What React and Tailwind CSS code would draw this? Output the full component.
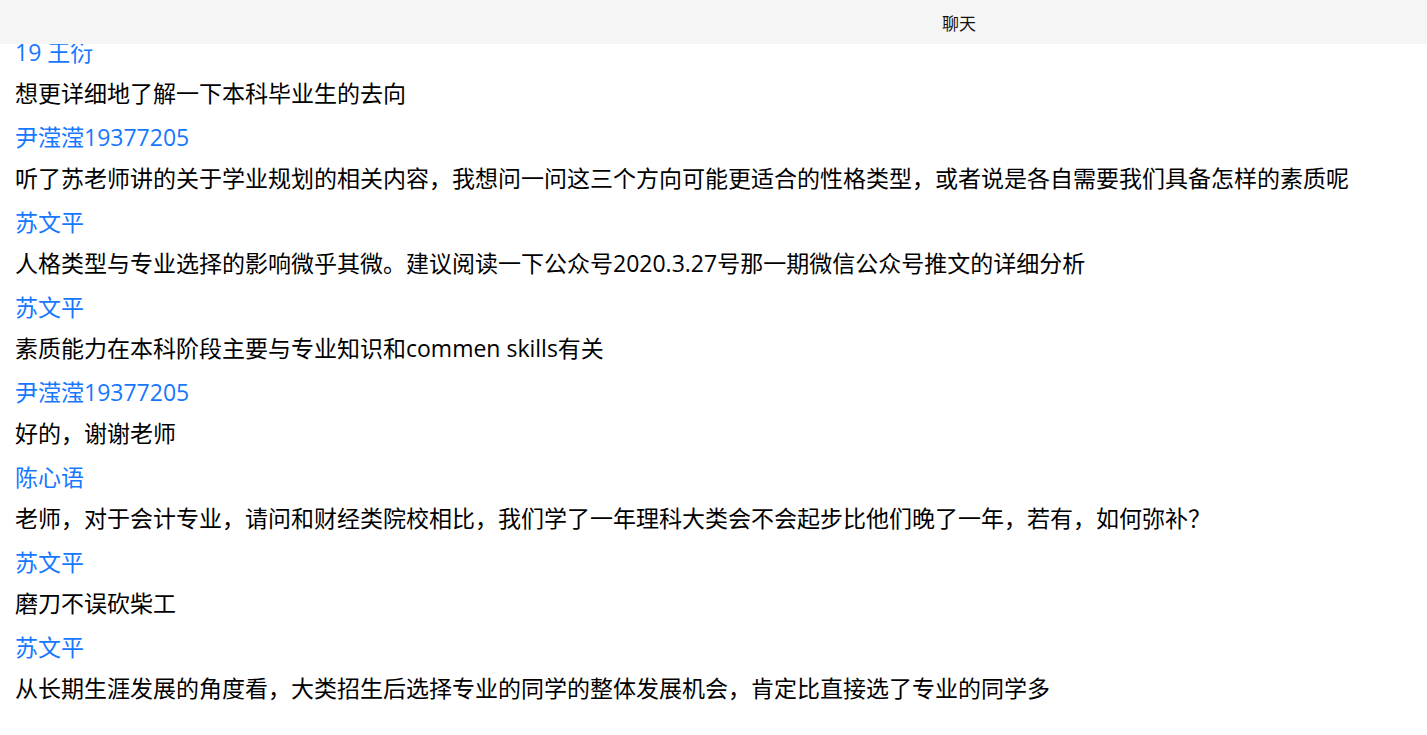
import React from "react";

const messages = [
  ["19 王衍", "想更详细地了解一下本科毕业生的去向"],
  ["尹滢滢19377205", "听了苏老师讲的关于学业规划的相关内容，我想问一问这三个方向可能更适合的性格类型，或者说是各自需要我们具备怎样的素质呢"],
  ["苏文平", "人格类型与专业选择的影响微乎其微。建议阅读一下公众号2020.3.27号那一期微信公众号推文的详细分析"],
  ["苏文平", "素质能力在本科阶段主要与专业知识和commen skills有关"],
  ["尹滢滢19377205", "好的，谢谢老师"],
  ["陈心语", "老师，对于会计专业，请问和财经类院校相比，我们学了一年理科大类会不会起步比他们晚了一年，若有，如何弥补？"],
  ["苏文平", "磨刀不误砍柴工"],
  ["苏文平", "从长期生涯发展的角度看，大类招生后选择专业的同学的整体发展机会，肯定比直接选了专业的同学多"],
];

export default function App() {
  return (
    <div
      className="relative w-full h-[735px] overflow-hidden bg-white"
      style={{ fontFamily: '"Open Sans", "Noto Sans CJK SC", sans-serif' }}
    >
      <div className="fixed top-0 left-0 z-10 w-full h-[44px] bg-[#f5f5f5] flex items-center pl-[942px]">
        <span
          className="text-[17px] text-[#111] leading-none"
          style={{ fontFamily: '"Noto Sans CJK SC", sans-serif' }}
        >
          聊天
        </span>
      </div>
      <div className="flex flex-col pt-[35px] pl-[15px]">
        {messages.map(([name, text], i) => (
          <div key={i} className="flex flex-col">
            <div className="text-[23px] leading-[34px] text-[#1677ff] mb-[7px] whitespace-nowrap">{name}</div>
            <div className="text-[23px] leading-[34px] text-black mb-[10px] whitespace-nowrap">{text}</div>
          </div>
        ))}
      </div>
    </div>
  );
}
